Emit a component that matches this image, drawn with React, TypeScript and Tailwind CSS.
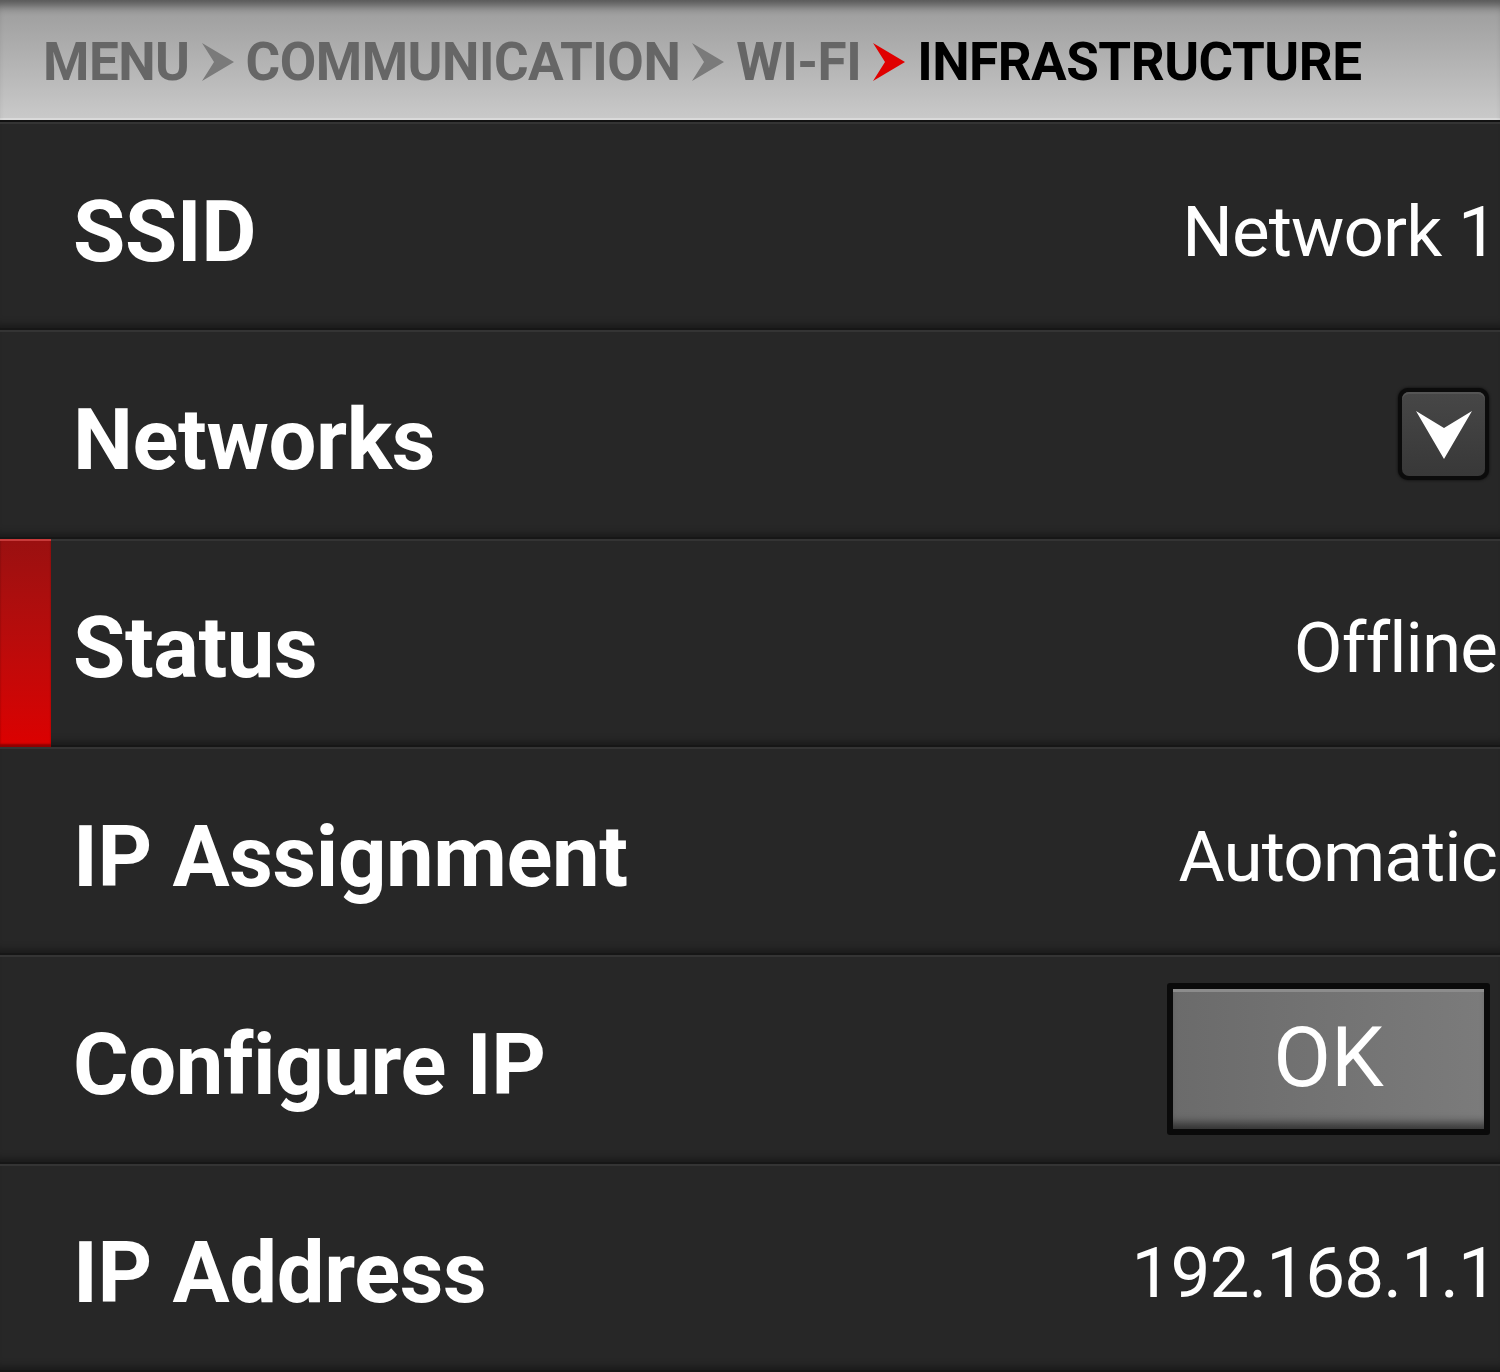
import React from 'react';

const font = { fontFamily: 'Roboto, "Liberation Sans", sans-serif' };

function Chevron({ red = false }: { red?: boolean }) {
  return (
    <svg width="32" height="38" viewBox="0 0 32 38" className="shrink-0">
      <polygon points="0,0 32,19 0,38 12,19" fill={red ? '#e00000' : '#7a7a7a'} />
    </svg>
  );
}

function DropdownButton() {
  return (
    <div className="mr-[11px] h-[92px] w-[91px] rounded-[10px] bg-[#0b0b0b] p-[4px] shadow-[0_0_3px_rgba(0,0,0,0.8)]">
      <div className="flex h-full w-full items-center justify-center rounded-[7px] bg-linear-to-b from-[#474747] to-[#383838] shadow-[inset_0_2px_0_#555]">
        <svg width="58" height="50" viewBox="0 0 58 50" className="mt-[2px]">
          <polygon points="1,1 29,18 57,1 29,49" fill="#ffffff" />
        </svg>
      </div>
    </div>
  );
}

function OkButton() {
  return (
    <div className="mr-[10px] h-[152px] w-[323px] rounded-[3px] bg-[#0a0a0a] p-[6px]">
      <div className="flex h-full w-full items-center justify-center bg-linear-to-r from-[#6b6b6b] to-[#7b7b7b] shadow-[inset_0_3px_0_#8c8c8c,inset_0_-12px_10px_-6px_rgba(0,0,0,0.55)]">
        <span className="pb-[2px] text-[84px] font-normal leading-none text-white" style={font}>
          OK
        </span>
      </div>
    </div>
  );
}

interface RowProps {
  label: string;
  value?: string;
  control?: React.ReactNode;
  alert?: boolean;
}

function Row({ label, value, control, alert = false }: RowProps) {
  return (
    <div className="flex flex-1 items-stretch bg-[#272727] shadow-[inset_0_2px_0_#343434,inset_0_-2px_0_#161616,inset_0_-12px_10px_-8px_rgba(0,0,0,0.45)]">
      {alert ? (
        <div className="w-[51px] shrink-0 bg-linear-to-b from-[#9a1010] to-[#dc0000] shadow-[inset_0_2px_0_#c83a3a,inset_0_-3px_2px_rgba(0,0,0,0.35)]" />
      ) : (
        <div className="w-[51px] shrink-0" />
      )}
      <div className="flex flex-1 items-center justify-between pl-[22px]">
        <span className="pt-[12px] text-[85px] font-bold leading-none tracking-[-0.4px] text-white" style={font}>
          {label}
        </span>
        {value ? (
          <span className="pr-[3px] pt-[10px] text-[71px] font-normal leading-none tracking-[-0.9px] text-white" style={font}>
            {value}
          </span>
        ) : null}
        {control}
      </div>
    </div>
  );
}

export default function App() {
  return (
    <div className="flex h-[1372px] w-[1500px] flex-col overflow-hidden bg-[#272727]">
      {/* breadcrumb header */}
      <header className="flex h-[122px] shrink-0 items-center border-b-[2px] border-[#121212] bg-linear-to-b from-[#9b9b9b] to-[#cacaca] pl-[43px] shadow-[inset_0_12px_10px_-6px_rgba(0,0,0,0.45),inset_0_-2px_0_#dadada]">
        <div className="flex items-center gap-[12px] pt-[4px] text-[53px] font-bold leading-none tracking-[-0.5px]" style={font}>
          <span className="text-[#666666]">MENU</span>
          <Chevron />
          <span className="text-[#666666]">COMMUNICATION</span>
          <Chevron />
          <span className="text-[#666666]">WI-FI</span>
          <Chevron red />
          <span className="text-black">INFRASTRUCTURE</span>
        </div>
      </header>

      <Row label="SSID" value="Network 1" />
      <Row label="Networks" control={<DropdownButton />} />
      <Row label="Status" value="Offline" alert />
      <Row label="IP Assignment" value="Automatic" />
      <Row label="Configure IP" control={<OkButton />} />
      <Row label="IP Address" value="192.168.1.1" />
    </div>
  );
}
